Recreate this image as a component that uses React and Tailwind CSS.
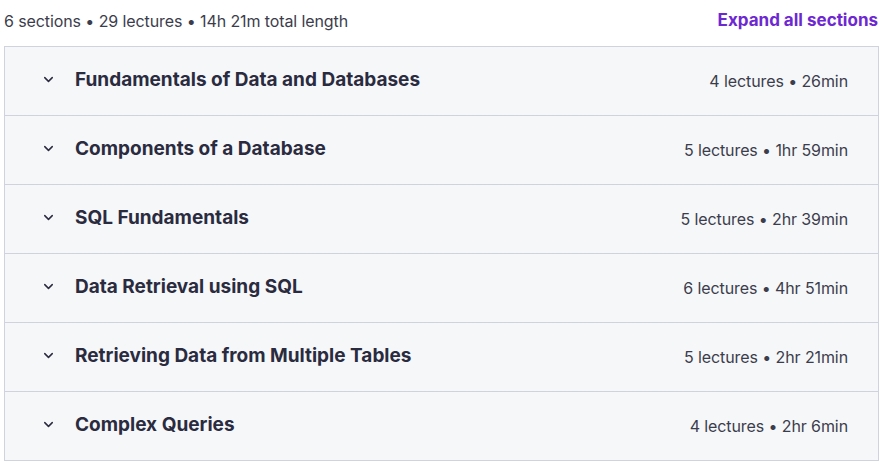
import { ChevronDown } from 'lucide-react'

const sections = [
    { title: 'Fundamentals of Data and Databases', meta: '4 lectures • 26min' },
    { title: 'Components of a Database', meta: '5 lectures • 1hr 59min' },
    { title: 'SQL Fundamentals', meta: '5 lectures • 2hr 39min' },
    { title: 'Data Retrieval using SQL', meta: '6 lectures • 4hr 51min' },
    { title: 'Retrieving Data from Multiple Tables', meta: '5 lectures • 2hr 21min' },
    { title: 'Complex Queries', meta: '4 lectures • 2hr 6min' },
]

const App = () => {
    return (
        <div className="w-[884px] h-[467px] bg-white font-['Inter',sans-serif] text-[#2a2b3f]">
            <div className="pl-[4px] pr-[6px]">
                {/* Summary line */}
                <div className="flex items-center justify-between h-[46px] pb-[4px]">
                    <span className="text-[16px] text-[#3c3d4c] tracking-[-0.1px]">
                        6 sections • 29 lectures • 14h 21m total length
                    </span>
                    <button className="text-[17px] font-bold text-[#6d28d2]">
                        Expand all sections
                    </button>
                </div>

                {/* Curriculum list */}
                <div className="border border-[#d1d2e0] w-[875px] divide-y divide-[#d1d2e0]">
                    {sections.map((section, index) => (
                        <div
                            key={index}
                            className="box-content flex items-center justify-between h-[68px] bg-[#f6f7f9] pl-[36px] pr-[30px]"
                        >
                            <div className="flex items-center gap-[19px]">
                                <ChevronDown
                                    size={15}
                                    strokeWidth={2.4}
                                    className="mb-[3px]"
                                />
                                <span className="text-[19px] font-bold pb-[2px]">
                                    {section.title}
                                </span>
                            </div>
                            <span className="text-[16px] text-[#3c3d4c] tracking-[-0.1px]">
                                {section.meta}
                            </span>
                        </div>
                    ))}
                </div>
            </div>
        </div>
    )
}

export default App
